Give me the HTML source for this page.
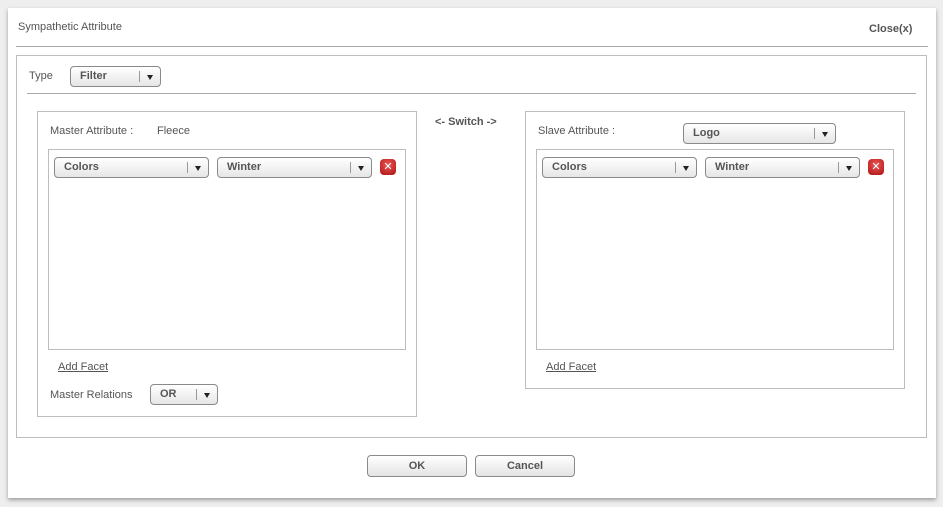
<!DOCTYPE html>
<html><head><style>
body{margin:0;width:943px;height:507px;background:#eeeeee;font-family:"Liberation Sans","DejaVu Sans",sans-serif;position:relative;overflow:hidden;color:#555}
.a{position:absolute}
#dlg{left:8px;top:8px;width:928px;height:490px;background:#fff;box-shadow:0 2px 4px rgba(0,0,0,.35)}
.t{position:absolute;font-size:11px;color:#555;white-space:nowrap;margin-top:1px}
.b{font-weight:bold}
.box{position:absolute;border:1px solid #bdbdbd;box-sizing:border-box}
.sel{position:absolute;height:21px;box-sizing:border-box;border:1px solid #8a8a8a;border-radius:4px;background:linear-gradient(#fff,#e6e6e6);font-size:11px;font-weight:bold;color:#555;line-height:19px;padding-left:9px}
.sel:after{content:"";position:absolute;right:7px;top:8px;border-left:3.5px solid transparent;border-right:3.5px solid transparent;border-top:5px solid #222}
.sel i{position:absolute;right:20px;top:4px;height:11px;border-left:1px solid #999}
.x{position:absolute;width:16px;height:16px;border-radius:4px;background:radial-gradient(circle at 50% 35%,#e55,#a11);color:#fff;font-size:11px;font-weight:bold;text-align:center;line-height:16px}
.u{text-decoration:underline}
.btn{position:absolute;height:22px;box-sizing:border-box;border:1px solid #8a8a8a;border-radius:4px;background:linear-gradient(#fff,#e4e4e4);font-size:11px;font-weight:bold;text-align:center;line-height:20px;color:#555}
</style></head><body>
<div class="a" id="dlg"></div>
<div class="t" style="left:18px;top:20px">Sympathetic Attribute</div>
<div class="t b" style="left:869px;top:22px">Close(x)</div>
<div class="a" style="left:16px;top:46px;width:912px;height:1px;background:#aaa"></div>
<div class="box" style="left:16px;top:55px;width:911px;height:383px"></div>
<div class="t" style="left:29px;top:69px">Type</div>
<div class="sel" style="left:70px;top:66px;width:91px">Filter<i></i></div>
<div class="a" style="left:27px;top:93px;width:889px;height:1px;background:#aaa"></div>

<div class="box" style="left:37px;top:111px;width:380px;height:306px"></div>
<div class="t" style="left:50px;top:124px">Master Attribute :</div>
<div class="t" style="left:157px;top:124px">Fleece</div>
<div class="box" style="left:48px;top:149px;width:358px;height:201px"></div>
<div class="sel" style="left:54px;top:157px;width:155px">Colors<i></i></div>
<div class="sel" style="left:217px;top:157px;width:155px">Winter<i></i></div>
<div class="x" style="left:380px;top:159px">✕</div>
<div class="t u" style="left:58px;top:360px">Add Facet</div>
<div class="t" style="left:50px;top:388px">Master Relations</div>
<div class="sel" style="left:150px;top:384px;width:68px">OR<i></i></div>

<div class="t b" style="left:435px;top:115px">&lt;- Switch -&gt;</div>

<div class="box" style="left:525px;top:111px;width:380px;height:278px"></div>
<div class="t" style="left:538px;top:124px">Slave Attribute :</div>
<div class="sel" style="left:683px;top:123px;width:153px">Logo<i></i></div>
<div class="box" style="left:536px;top:149px;width:358px;height:201px"></div>
<div class="sel" style="left:542px;top:157px;width:155px">Colors<i></i></div>
<div class="sel" style="left:705px;top:157px;width:155px">Winter<i></i></div>
<div class="x" style="left:868px;top:159px">✕</div>
<div class="t u" style="left:546px;top:360px">Add Facet</div>

<div class="btn" style="left:367px;top:455px;width:100px">OK</div>
<div class="btn" style="left:475px;top:455px;width:100px">Cancel</div>
</body></html>
